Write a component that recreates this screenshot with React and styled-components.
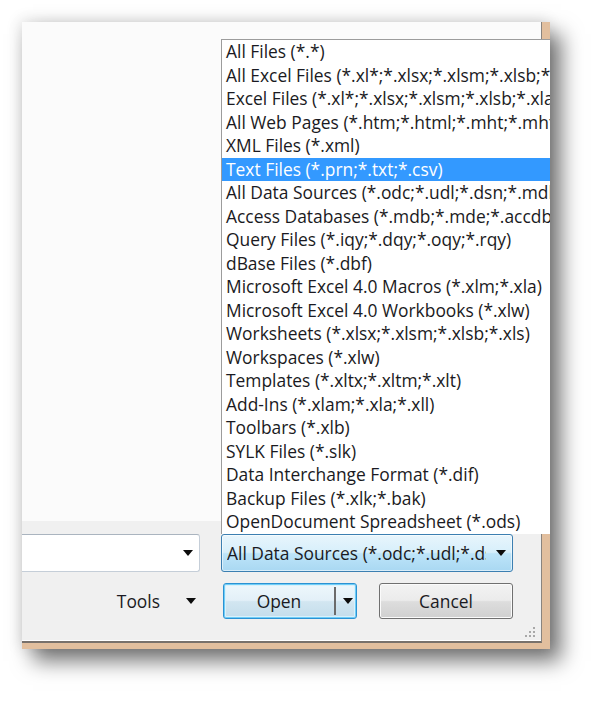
import React from "react";
import styled, { createGlobalStyle } from "styled-components";

const GlobalStyle = createGlobalStyle`
  html, body {
    margin: 0;
    background: #ffffff;
  }
  body {
    font-family: "Open Sans", "Noto Sans", sans-serif;
    color: #1a1a22;
  }
`;

const fileTypes = [
  "All Files (*.*)",
  "All Excel Files (*.xl*;*.xlsx;*.xlsm;*.xlsb;*.xlam;*.xltx;*.xltm;*.xls;*.xla)",
  "Excel Files (*.xl*;*.xlsx;*.xlsm;*.xlsb;*.xlam;*.xltx;*.xltm;*.xls)",
  "All Web Pages (*.htm;*.html;*.mht;*.mhtml)",
  "XML Files (*.xml)",
  "Text Files (*.prn;*.txt;*.csv)",
  "All Data Sources (*.odc;*.udl;*.dsn;*.mdb;*.mde;*.accdb)",
  "Access Databases (*.mdb;*.mde;*.accdb;*.accde)",
  "Query Files (*.iqy;*.dqy;*.oqy;*.rqy)",
  "dBase Files (*.dbf)",
  "Microsoft Excel 4.0 Macros (*.xlm;*.xla)",
  "Microsoft Excel 4.0 Workbooks (*.xlw)",
  "Worksheets (*.xlsx;*.xlsm;*.xlsb;*.xls)",
  "Workspaces (*.xlw)",
  "Templates (*.xltx;*.xltm;*.xlt)",
  "Add-Ins (*.xlam;*.xla;*.xll)",
  "Toolbars (*.xlb)",
  "SYLK Files (*.slk)",
  "Data Interchange Format (*.dif)",
  "Backup Files (*.xlk;*.bak)",
  "OpenDocument Spreadsheet (*.ods)",
];

const Stage = styled.div`
  width: 605px;
  height: 704px;
  padding: 22px 0 0 22px;
  box-sizing: border-box;
  overflow: hidden;
`;

const Frame = styled.div`
  position: relative;
  width: 528px;
  height: 627px;
  box-sizing: border-box;
  padding: 0 8px 8px 0;
  background: #e2bf9e;
  box-shadow: 11px 12px 20px rgba(0, 0, 0, 0.55),
    -2px -2px 14px rgba(0, 0, 0, 0.12);
`;

const Window = styled.div`
  height: 100%;
  display: flex;
  flex-direction: column;
  border-right: 1px solid #8a847e;
  border-bottom: 2px solid #78716b;
  box-shadow: inset 0 -1px 0 #ffffff;
  background: #f0f0f0;
`;

const Browser = styled.div`
  height: 499px;
  background: #fbfbfb;
`;

const Footer = styled.div`
  position: relative;
  flex: 1;
  padding: 13px 28px 0 0;
`;

const Row = styled.div`
  display: flex;
  align-items: center;
  justify-content: flex-end;
  gap: ${(p) => p.gap}px;
  height: ${(p) => p.h}px;
  margin-top: ${(p) => p.mt || 0}px;
`;

const Arrow = styled.span`
  width: 0;
  height: 0;
  border-left: 5.5px solid transparent;
  border-right: 5.5px solid transparent;
  border-top: 6px solid #0c0c0c;
  flex: none;
`;

const Combo = styled.div`
  display: flex;
  align-items: center;
  box-sizing: border-box;
  width: ${(p) => p.w}px;
  height: 38px;
  padding: 0 6px 0 5px;
  font-size: 17.4px;
  white-space: nowrap;
  overflow: hidden;
  ${(p) =>
    p.active
      ? `
    border: 1px solid #3c7fb1;
    border-radius: 3px;
    background: linear-gradient(#e8f5fc 0%, #d7effb 48%, #bde4f9 52%, #a9d8f2 100%);
    box-shadow: inset 0 0 0 1px rgba(255,255,255,0.55);
  `
      : `
    border: 1px solid #c5ced8;
    border-top-color: #aab4bf;
    border-left: none;
    border-radius: 0 3px 3px 0;
    background: #ffffff;
  `}
`;

const ComboText = styled.span`
  flex: 1;
  overflow: hidden;
  margin-right: 10px;
`;

const ToolsMenu = styled.div`
  display: flex;
  align-items: center;
  gap: 26px;
  margin-right: 5px;
  font-size: 17.4px;
`;

const Button = styled.div`
  display: flex;
  align-items: center;
  box-sizing: border-box;
  width: 134px;
  height: 36px;
  border-radius: 3px;
  font-size: 17.4px;
  ${(p) =>
    p.primary
      ? `
    border: 1px solid #2b92d3;
    box-shadow: inset 0 0 0 1px #6fcdf7, inset 0 0 0 2px #d9f1fb;
    background: linear-gradient(#eef7fc 0%, #e3f0f8 48%, #d2e6f1 52%, #c4ddeb 100%);
  `
      : `
    border: 1px solid #707070;
    box-shadow: inset 0 0 0 1px #fbfbfb;
    background: linear-gradient(#f3f3f3 0%, #ebebeb 48%, #dddddd 52%, #d0d0d0 100%);
  `}
`;

const Label = styled.span`
  flex: 1;
  text-align: center;
`;

const SplitLine = styled.span`
  width: 2px;
  height: 28px;
  background: #6b6b6b;
  margin-right: 4px;
`;

const SplitArrow = styled.span`
  width: 16px;
  display: flex;
  justify-content: center;
`;

const Grip = styled.svg`
  position: absolute;
  right: 4px;
  bottom: 2px;
`;

const DropList = styled.ul`
  position: absolute;
  left: 199px;
  top: 17px;
  width: 329px;
  margin: 0;
  padding: 0;
  list-style: none;
  box-sizing: border-box;
  background: #ffffff;
  border-top: 1px solid #9c9c9c;
  border-left: 1px solid #9c9c9c;
  overflow: hidden;
`;

const Option = styled.li`
  height: 23.5px;
  line-height: 23.5px;
  padding-left: 4px;
  font-size: 17.4px;
  white-space: nowrap;
  background: ${(p) => (p.selected ? "#3399ff" : "transparent")};
  color: ${(p) => (p.selected ? "#ffffff" : "#1a1a22")};
`;

export default function App() {
  return (
    <>
      <GlobalStyle />
      <Stage>
        <Frame>
          <Window>
            <Browser />
            <Footer>
              <Row gap={21} h={38}>
                <Combo w={178}>
                  <ComboText />
                  <Arrow />
                </Combo>
                <Combo w={292} active>
                  <ComboText>All Data Sources (*.odc;*.udl;*.dsn;*.mdb;*.mde;*.accdb)</ComboText>
                  <Arrow />
                </Combo>
              </Row>
              <Row gap={22} h={36} mt={11}>
                <ToolsMenu>
                  <span>Tools</span>
                  <Arrow />
                </ToolsMenu>
                <Button primary>
                  <Label>Open</Label>
                  <SplitLine />
                  <SplitArrow>
                    <Arrow />
                  </SplitArrow>
                </Button>
                <Button>
                  <Label>Cancel</Label>
                </Button>
              </Row>
              <Grip width="14" height="14" viewBox="0 0 14 14">
                <g fill="#a8a8a8">
                  <rect x="10" y="2" width="2" height="2" />
                  <rect x="6" y="6" width="2" height="2" />
                  <rect x="10" y="6" width="2" height="2" />
                  <rect x="2" y="10" width="2" height="2" />
                  <rect x="6" y="10" width="2" height="2" />
                  <rect x="10" y="10" width="2" height="2" />
                </g>
              </Grip>
            </Footer>
          </Window>
          <DropList>
            {fileTypes.map((t, i) => (
              <Option key={t} selected={i === 5}>
                {t}
              </Option>
            ))}
          </DropList>
        </Frame>
      </Stage>
    </>
  );
}
